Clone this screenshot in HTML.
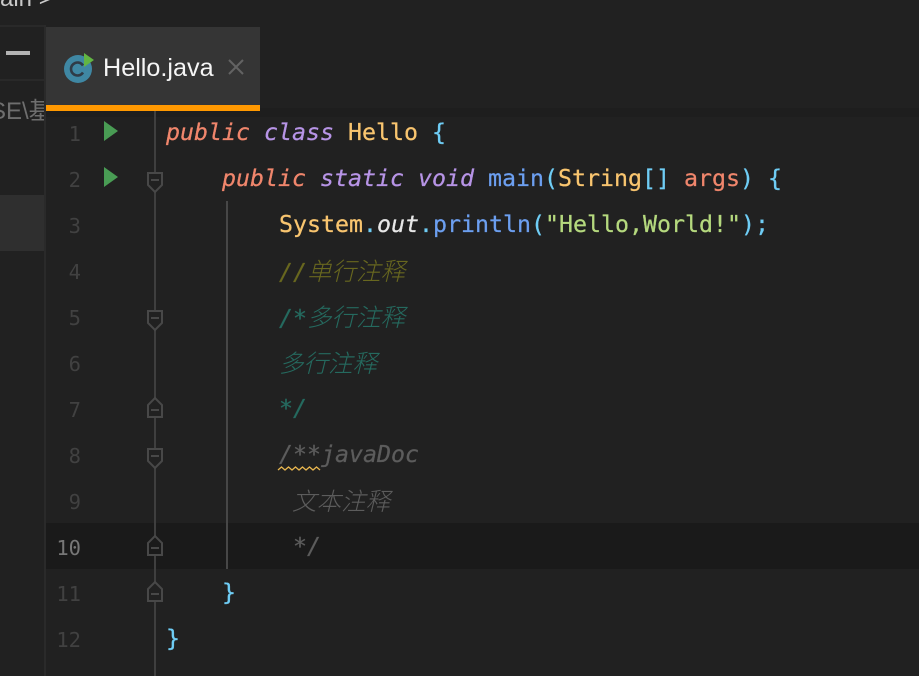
<!DOCTYPE html>
<html><head><meta charset="utf-8">
<style>
html,body{margin:0;padding:0;background:#212121;}
#r{position:relative;width:919px;height:676px;overflow:hidden;background:#212121;}
.a{position:absolute;}
.l{position:absolute;white-space:pre;font-family:"DejaVu Sans Mono","Noto Sans CJK SC",monospace;font-size:23.25px;line-height:46px;height:46px;-webkit-text-stroke:0.25px currentColor;}
.n{position:absolute;font-family:"DejaVu Sans Mono",monospace;font-size:20.5px;line-height:46px;color:#414141;text-align:right;left:20px;width:61px;white-space:pre;}
i{font-style:italic}
.cn{font-family:"Noto Sans CJK SC",sans-serif;font-size:24.5px;font-style:italic;font-weight:300;-webkit-text-stroke:0}
.kw{color:#f0866c}.pu{color:#b794e6}.cl{color:#f9c56f}.br{color:#6fcdf5}.fn{color:#6c9ff0}.st{color:#b5d97e}.wh{color:#e8e8e8}
.c1{color:#68671f}.c2{color:#256a5f}.c3{color:#5c5c5c}
</style></head><body>
<div id="r">
<!-- top -->
<div class="a" style="left:0;top:-15px;font:24px 'Liberation Sans',sans-serif;color:#c9c9c9;white-space:pre">ain &gt;</div>
<div class="a" style="left:0;top:25px;width:46px;height:2px;background:#292929"></div>
<div class="a" style="left:0;top:79px;width:46px;height:2px;background:#292929"></div>
<div class="a" style="left:6px;top:51px;width:24px;height:4px;background:#b3b3b3"></div>
<div class="a" style="left:0;top:96px;width:44px;overflow:hidden;height:32px"><div style="margin-left:-10px;white-space:pre;font:24px/32px 'Liberation Sans','Noto Sans CJK SC',sans-serif;color:#6e6e6e">SE\基础</div></div>
<div class="a" style="left:0;top:195px;width:44px;height:56px;background:#2f2f2f"></div>
<div class="a" style="left:44px;top:25px;width:2px;height:651px;background:#2a2a2a"></div>
<!-- tab bar -->
<div class="a" style="left:46px;top:27px;width:214px;height:78px;background:#353535"></div>
<div class="a" style="left:46px;top:108px;width:873px;height:9px;background:#1e1e1e;z-index:0"></div>
<div class="a" style="left:46px;top:105px;width:214px;height:6px;background:#ff9800"></div>
<svg class="a" style="left:60px;top:50px" width="40" height="36" viewBox="0 0 40 36">
<circle cx="18" cy="19" r="14" fill="#3f87a3"/>
<path d="M23 15.500A6.500 6.500 0 1 0 23 22.500" fill="none" stroke="#2f3b47" stroke-width="2.600"/>
<path d="M24 3L34 10L24 17Z" fill="#62b543"/>
</svg>
<div class="a" style="left:103px;top:50px;font:25.2px/36px 'Liberation Sans',sans-serif;color:#f5f5f5;white-space:pre">Hello.java</div>
<svg class="a" style="left:227px;top:58px" width="18" height="18"><path d="M2 2L16 16M16 2L2 16" stroke="#636363" stroke-width="2"/></svg>
<!-- current line -->
<div class="a" style="left:46px;top:523px;width:873px;height:46px;background:#1a1a1a"></div>
<!-- numbers -->
<div class="n" style="top:111px">1</div>
<div class="n" style="top:157px">2</div>
<div class="n" style="top:203px">3</div>
<div class="n" style="top:249px">4</div>
<div class="n" style="top:295px">5</div>
<div class="n" style="top:341px">6</div>
<div class="n" style="top:387px">7</div>
<div class="n" style="top:433px">8</div>
<div class="n" style="top:479px">9</div>
<div class="n" style="top:525px;color:#777">10</div>
<div class="n" style="top:571px">11</div>
<div class="n" style="top:617px">12</div>
<!-- gutter & icons -->
<svg class="a" style="left:0;top:0" width="919" height="676">
<path d="M104 121L118 131L104 141ZM104 167L118 177L104 187Z" fill="#499c54"/>
<path d="M155 111V676" stroke="#3f3f3f" stroke-width="2"/>
<path d="M227 201V569" stroke="#474747" stroke-width="2"/>
<g fill="#212121" stroke="#484848" stroke-width="2">
<path d="M148 173H162V185L155 192L148 185Z"/>
<path d="M148 311H162V323L155 330L148 323Z"/>
<path d="M148 449H162V461L155 468L148 461Z"/>
<path d="M148 417H162V405L155 398L148 405Z"/>
<path d="M148 555H162V543L155 536L148 543Z" fill="#1a1a1a"/>
<path d="M148 601H162V589L155 582L148 589Z"/>
</g>
<path d="M151 180H159M151 318H159M151 456H159M151 410H159M151 548H159M151 594H159" stroke="#484848" stroke-width="2"/>
<path d="M278 470l3.500-3 3.500 3 3.500-3 3.500 3 3.500-3 3.500 3 3.500-3 3.500 3 3.500-3 3.500 3 3.500-3 3.500 3" fill="none" stroke="#e8b64f" stroke-width="1.300"/>
</svg>
<!-- code -->
<div class="l" style="left:166px;top:110px"><i class="kw">public</i> <i class="pu">class</i> <span class="cl">Hello</span> <span class="br">{</span></div>
<div class="l" style="left:222px;top:156px"><i class="kw">public</i> <i class="pu">static</i> <i class="pu">void</i> <span class="fn">main</span><span class="br">(</span><span class="cl">String</span><span class="br">[]</span> <span class="kw">args</span><span class="br">)</span> <span class="br">{</span></div>
<div class="l" style="left:279px;top:202px"><span class="cl">System</span><span class="br">.</span><i class="wh">out</i><span class="br">.</span><span class="fn">println</span><span class="br">(</span><span class="st">"Hello,World!"</span><span class="br">);</span></div>
<div class="l c1" style="left:279px;top:248px"><i>//</i><span class="cn">单行注释</span></div>
<div class="l c2" style="left:279px;top:294px"><i>/*</i><span class="cn">多行注释</span></div>
<div class="l c2" style="left:279px;top:340px"><span class="cn">多行注释</span></div>
<div class="l c2" style="left:279px;top:386px"><i>*/</i></div>
<div class="l c3" style="left:279px;top:432px"><i>/**javaDoc</i></div>
<div class="l c3" style="left:292px;top:478px"><span class="cn">文本注释</span></div>
<div class="l c3" style="left:293px;top:524px"><i>*/</i></div>
<div class="l br" style="left:222px;top:570px">}</div>
<div class="l br" style="left:166px;top:616px">}</div>
</div>
</body></html>
